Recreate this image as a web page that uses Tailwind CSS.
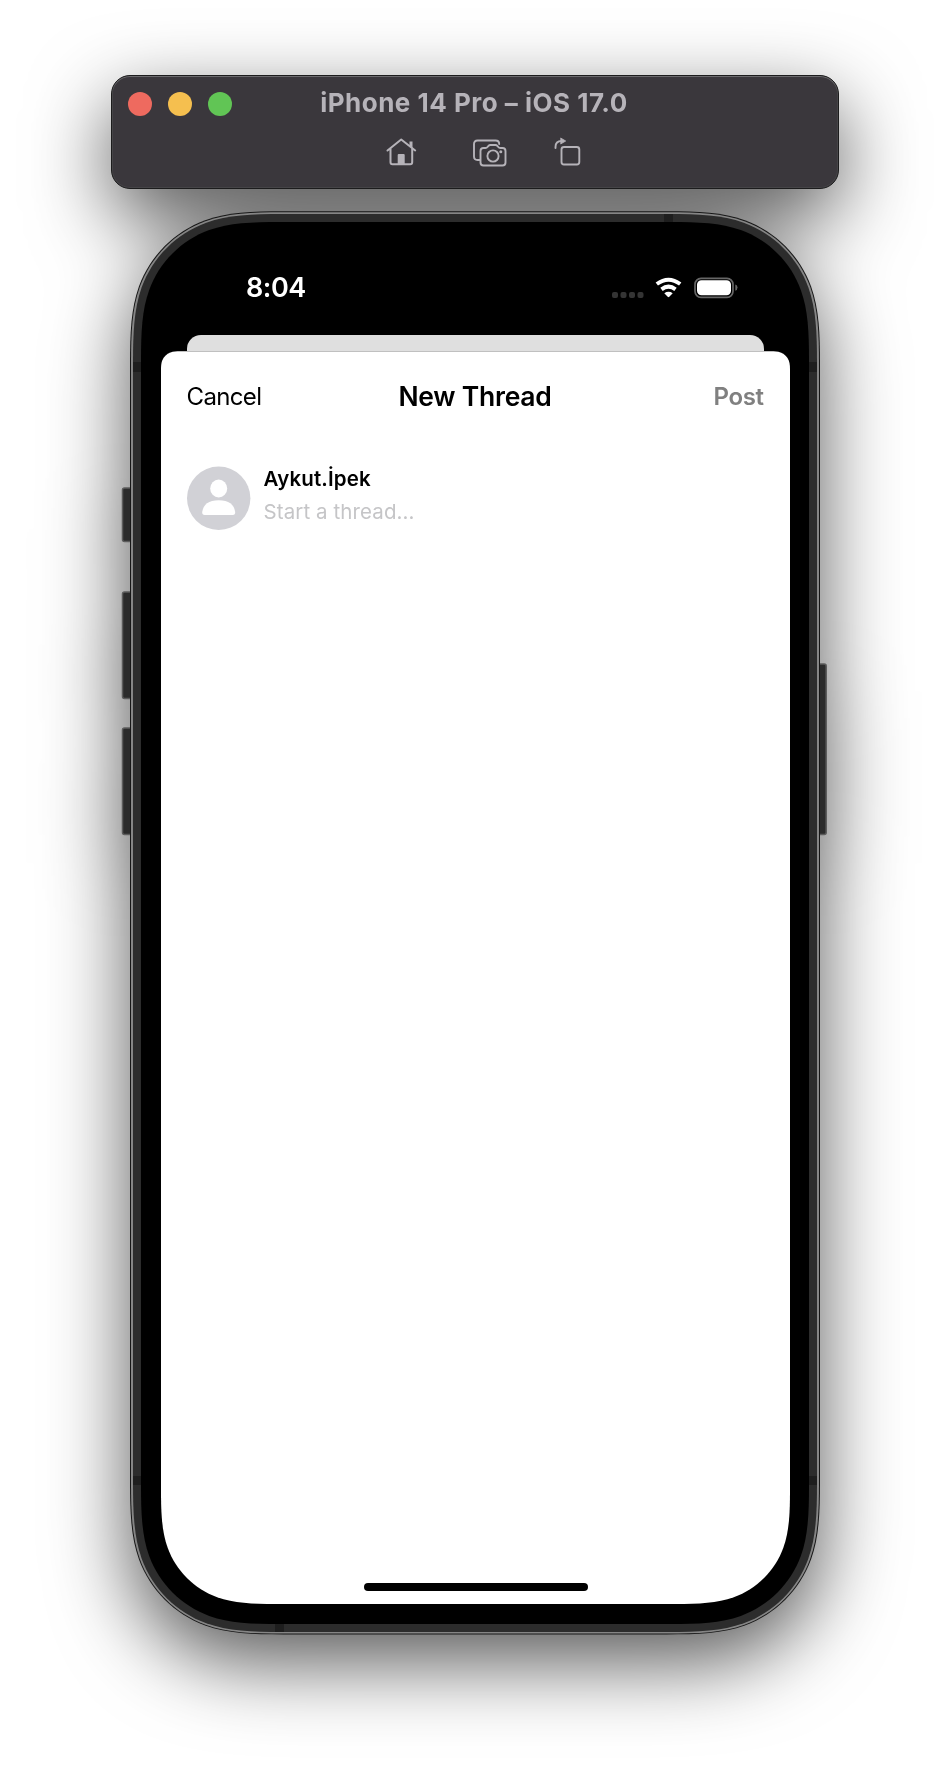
<!DOCTYPE html>
<html lang="en">
<head>
<meta charset="utf-8">
<title>iPhone 14 Pro – iOS 17.0</title>
<script src="https://cdn.jsdelivr.net/npm/@tailwindcss/browser@4"></script>
</head>
<body class="h-[1786px] w-[950px] overflow-hidden bg-white font-['Inter',sans-serif]">
<div class="flex flex-col items-center pt-[75px] [filter:drop-shadow(0_28px_40px_rgba(0,0,0,0.65))]">

  <header class="relative flex h-[114px] w-[728px] flex-col rounded-[19px] border border-[#1c1c1d] bg-[#3a373c] shadow-[inset_0_1px_0_#6b6a6d,inset_0_0_0_1px_#454447]">
    <div class="relative flex h-[59px] items-center px-4 pb-[3px]">
      <div class="flex gap-4">
        <span class="size-6 rounded-full bg-[#ee6a5f]"></span>
        <span class="size-6 rounded-full bg-[#f5bf4f]"></span>
        <span class="size-6 rounded-full bg-[#61c555]"></span>
      </div>
      <h1 class="absolute inset-x-0 top-[11px] pr-[2px] text-center text-[26px] leading-8 font-bold tracking-[0.5px] whitespace-nowrap text-[#b6b3b9]">iPhone 14 Pro – iOS 17.0</h1>
    </div>
    <div class="flex pl-[273px] text-[#b6b3b9]">
      <svg class="h-[34px] w-[34px]" viewBox="0 0 34 34" fill="none" stroke="currentColor" stroke-width="2" stroke-linecap="round" stroke-linejoin="round">
        <path d="M2.500 15.500 16.200 4.500 30.200 15.500M5.500 13.500V27.300Q5.500 29.300 7.500 29.300H25.200Q27.200 29.300 27.200 27.300V13.500"/>
        <path d="M12.700 20Q12.700 19 13.700 19H18.700Q19.700 19 19.700 20V29H12.700ZM24.500 6.500H27.500V13.300L24.500 10.900Z" fill="currentColor" stroke="none"/>
      </svg>
      <svg class="ml-[52px] h-[34px] w-[38px]" viewBox="0 0 38 34" fill="none" stroke="currentColor" stroke-width="1.900" stroke-linecap="round" stroke-linejoin="round">
        <path d="M8.500 25H6.500Q3 25 3 21.500V9Q3 5.500 6.500 5.500H24.500Q28.200 5.500 28.200 9"/>
        <path d="M12.500 13H14.500Q15.700 13 16.500 12L17.500 10.800Q18.200 10 19.300 10H24.500Q25.600 10 26.300 10.800L27.300 12Q28 13 29.300 13H31.500Q34.500 13 34.500 16V27.500Q34.500 30.500 31.500 30.500H12.500Q9.500 30.500 9.500 27.500V16Q9.500 13 12.500 13Z"/>
        <circle cx="22" cy="21" r="5.600"/><circle cx="29.800" cy="16.800" r="1.500" fill="currentColor" stroke="none"/>
      </svg>
      <svg class="ml-[44px] h-[34px] w-[32px]" viewBox="0 0 32 34" fill="none" stroke="currentColor" stroke-width="1.900" stroke-linecap="round" stroke-linejoin="round">
        <path d="M2.500 13V12Q2.500 6 8.500 6"/>
        <path d="M8 3.200 12.700 6 8 8.800Z" fill="currentColor" stroke-width=".8"/>
        <rect x="8.500" y="12" width="17.800" height="17.500" rx="2.500"/>
      </svg>
    </div>
  </header>

  <main class="relative mt-[22px] h-[1424px] w-[708px] pl-[9px]">
    <!-- device body -->
    <svg class="absolute inset-0 h-[1424px] w-[708px]" viewBox="121 211 708 1424">
      <g fill="#2b2b2b" stroke="#5c5c5c" stroke-width="1.500">
        <rect x="122.500" y="488" width="14" height="53.500" rx="2"/>
        <rect x="122.500" y="592" width="14" height="106.500" rx="2"/>
        <rect x="122.500" y="728" width="14" height="106.500" rx="2"/>
        <rect x="813" y="664" width="13.200" height="170.500" rx="2"/>
      </g>
      <path data-box="130 211.300 690 1423.200 119" fill="#161616"/>
      <path data-box="131 212.300 688 1421.200 118" fill="#858585"/>
      <path data-box="133 214 684 1418 116" fill="#2c2c2c"/>
      <g fill="#1e1e1e">
        <rect x="133" y="362" width="9" height="10"/><rect x="808" y="362" width="9" height="10"/>
        <rect x="133" y="1476" width="9" height="9"/><rect x="808" y="1476" width="9" height="9"/>
        <rect x="664" y="214" width="9" height="9"/><rect x="275" y="1623" width="9" height="9"/>
      </g>
      <path data-box="141 222 668 1402 108" fill="#000"/>
      <path data-box="161 351.300 629 1252.700 89" data-top="15" fill="#fff"/>
    </svg>

    <div class="relative flex h-full flex-col pr-[9px]">
      <div class="flex h-[124px] w-full items-start justify-between pt-[60px] pr-[82px] pl-[116px] text-white">
        <time class="text-[27px] leading-[34px] font-semibold tracking-[-0.5px]">8:04</time>
        <div class="flex pt-1">
          <svg class="h-[24px] w-[128px]" viewBox="610 275 128 24">
            <g fill="#343434"><rect x="612" y="292" width="6" height="6" rx="2"/><rect x="620.500" y="292" width="6" height="6" rx="2"/><rect x="629" y="292" width="6" height="6" rx="2"/><rect x="637.500" y="292" width="6" height="6" rx="2"/></g>
            <g fill="none" stroke="#fff" stroke-width="4"><path d="M656.800 284Q668.500 275.500 680.200 284M661.500 289.300Q668.500 284 675.500 289.300"/></g>
            <path d="M664.300 293.200Q668.500 290.300 672.700 293.200L669.300 296.800Q668.500 297.600 667.700 296.800Z" fill="#fff"/>
            <rect x="695" y="278.300" width="38" height="19" rx="6" fill="none" stroke="#666" stroke-width="1.700"/>
            <rect x="697" y="280.300" width="34" height="15" rx="4.500" fill="#fff"/>
            <path d="M735.300 284.500Q737.500 285.200 737.500 287.600T735.300 290.800Z" fill="#666"/>
          </svg>
        </div>
      </div>
      <div class="mx-auto h-4 w-[577px] rounded-t-[14px] bg-[#dfdfdf]"></div>

      <section class="mx-auto flex w-[629px] grow flex-col px-[26px]">
        <nav class="relative flex h-[92px] items-center justify-between text-[24px]">
          <span class="tracking-[-0.65px] text-black">Cancel</span>
          <h2 class="absolute inset-x-0 text-center text-[26.500px] font-semibold tracking-[-0.25px] text-black">New Thread</h2>
          <span class="font-semibold tracking-[-0.4px] text-[#808080]">Post</span>
        </nav>
        <article class="mt-[23px] flex gap-[13px]">
          <svg class="size-16" viewBox="0 0 64 64"><circle cx="31.700" cy="32.300" r="31.700" fill="#d1d1d6"/><g fill="#fff"><ellipse cx="31.700" cy="22.500" rx="8.500" ry="9"/><path d="M15.200 46Q16.700 34.500 31.700 34.200Q46.700 34.500 48.200 46Q48.400 49 45.700 49H17.700Q15 49 15.200 46Z"/></g></svg>
          <div class="-mt-px text-[20.500px]">
            <p class="h-[33px] leading-[27px] font-semibold tracking-[0.15px] text-black">Aykut.İpek</p>
            <p class="leading-[27px] tracking-[0.1px] text-[#c5c5c7]">Start a thread...</p>
          </div>
        </article>
        <div class="mt-auto mb-[44px] ml-[177px] h-2 w-[224px] rounded-full bg-black"></div>
      </section>
    </div>
  </main>
</div>
<script>
// Rounded rectangles with continuous-curvature corners: "x y width height radius".
document.querySelectorAll('[data-box]').forEach(function (p) {
  var v = p.dataset.box.split(' ').map(Number), x = v[0], y = v[1], w = v[2], h = v[3], r = v[4];
  function corner(cx, cy, ax, ay, bx, by, r) {
    // runs in along edge a, out along edge b
    function pt(a, b) { return (cx + (ax * a + bx * b) * r).toFixed(2) + ' ' + (cy + (ay * a + by * b) * r).toFixed(2) + ' '; }
    return 'L' + pt(1.29, 0) +
      'C' + pt(1.02, 0) + pt(.82, .008) + pt(.6315, .0749) +
      'C' + pt(.3728, .1691) + pt(.1691, .3728) + pt(.0749, .6315) +
      'C' + pt(.008, .82) + pt(0, 1.02) + pt(0, 1.29);
  }
  var t = p.dataset.top ? +p.dataset.top : r;
  p.setAttribute('d', ('M' + corner(x, y, 0, 1, 1, 0, t).slice(1) + corner(x + w, y, -1, 0, 0, 1, t) +
    corner(x + w, y + h, 0, -1, -1, 0, r) + corner(x, y + h, 1, 0, 0, -1, r) + 'Z'));
});
</script>
</body>
</html>
